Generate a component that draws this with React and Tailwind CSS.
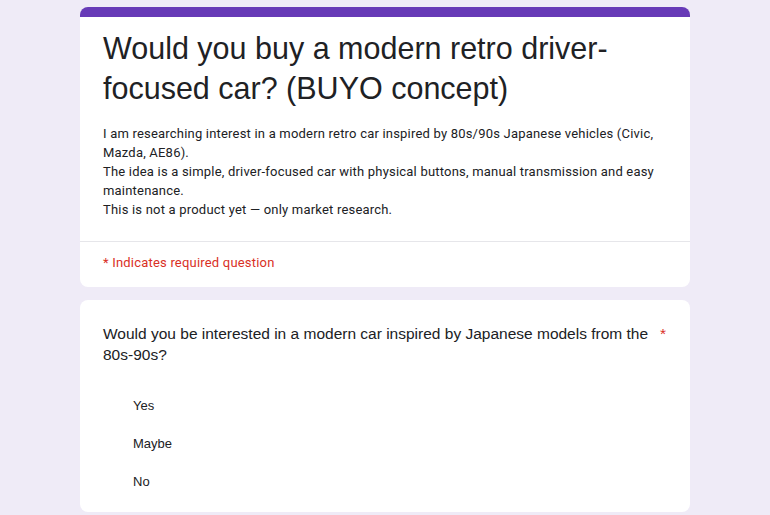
export default function App() {
  const options = ["Yes", "Maybe", "No"]

  return (
    <div className="min-h-[515px] bg-[#efebf7] pt-[7px]">
      <div className="mx-auto flex w-[610px] flex-col gap-[13px]">
        {/* Header card */}
        <div className="overflow-hidden rounded-lg border-t-[10px] border-[#673ab7] bg-white">
          <div className="px-[23px] pt-[11px] pb-[22px]">
            <h1 className="font-['Liberation_Sans',Arial,sans-serif] text-[30.5px] leading-[40px] text-[#202124]">
              Would you buy a modern retro driver-focused car? (BUYO concept)
            </h1>
            <div className="mt-[16px] font-['Roboto',sans-serif] text-[13px] leading-[19px] tracking-[0.2px] text-[#202124]">
              <p>I am researching interest in a modern retro car inspired by 80s/90s Japanese vehicles (Civic, Mazda, AE86).</p>
              <p>The idea is a simple, driver-focused car with physical buttons, manual transmission and easy maintenance.</p>
              <p>This is not a product yet — only market research.</p>
            </div>
          </div>
          <div className="border-t border-[#e6e6ea] px-[23px] pt-[11px] pb-[15px] font-['Roboto',sans-serif] text-[13px] leading-[19px] tracking-[0.2px] text-[#d93025]">
            * Indicates required question
          </div>
        </div>

        {/* Question card */}
        <div className="rounded-lg bg-white px-[23px] pt-[23px] pb-[20px]">
          <div className="flex items-start justify-between font-['Liberation_Sans',Arial,sans-serif] text-[15.5px] leading-[21px] text-[#202124]">
            <p className="w-[552px]">
              Would you be interested in a modern car inspired by Japanese models from the 80s-90s?
            </p>
            <span className="mr-[1px] text-[#d93025]">*</span>
          </div>
          <div className="mt-[31px] flex flex-col gap-[18px] pl-[30px]">
            {options.map((opt) => (
              <div key={opt} className="font-['Liberation_Sans',Arial,sans-serif] text-[13px] leading-[20px] text-[#202124]">
                {opt}
              </div>
            ))}
          </div>
        </div>
      </div>
    </div>
  )
}
